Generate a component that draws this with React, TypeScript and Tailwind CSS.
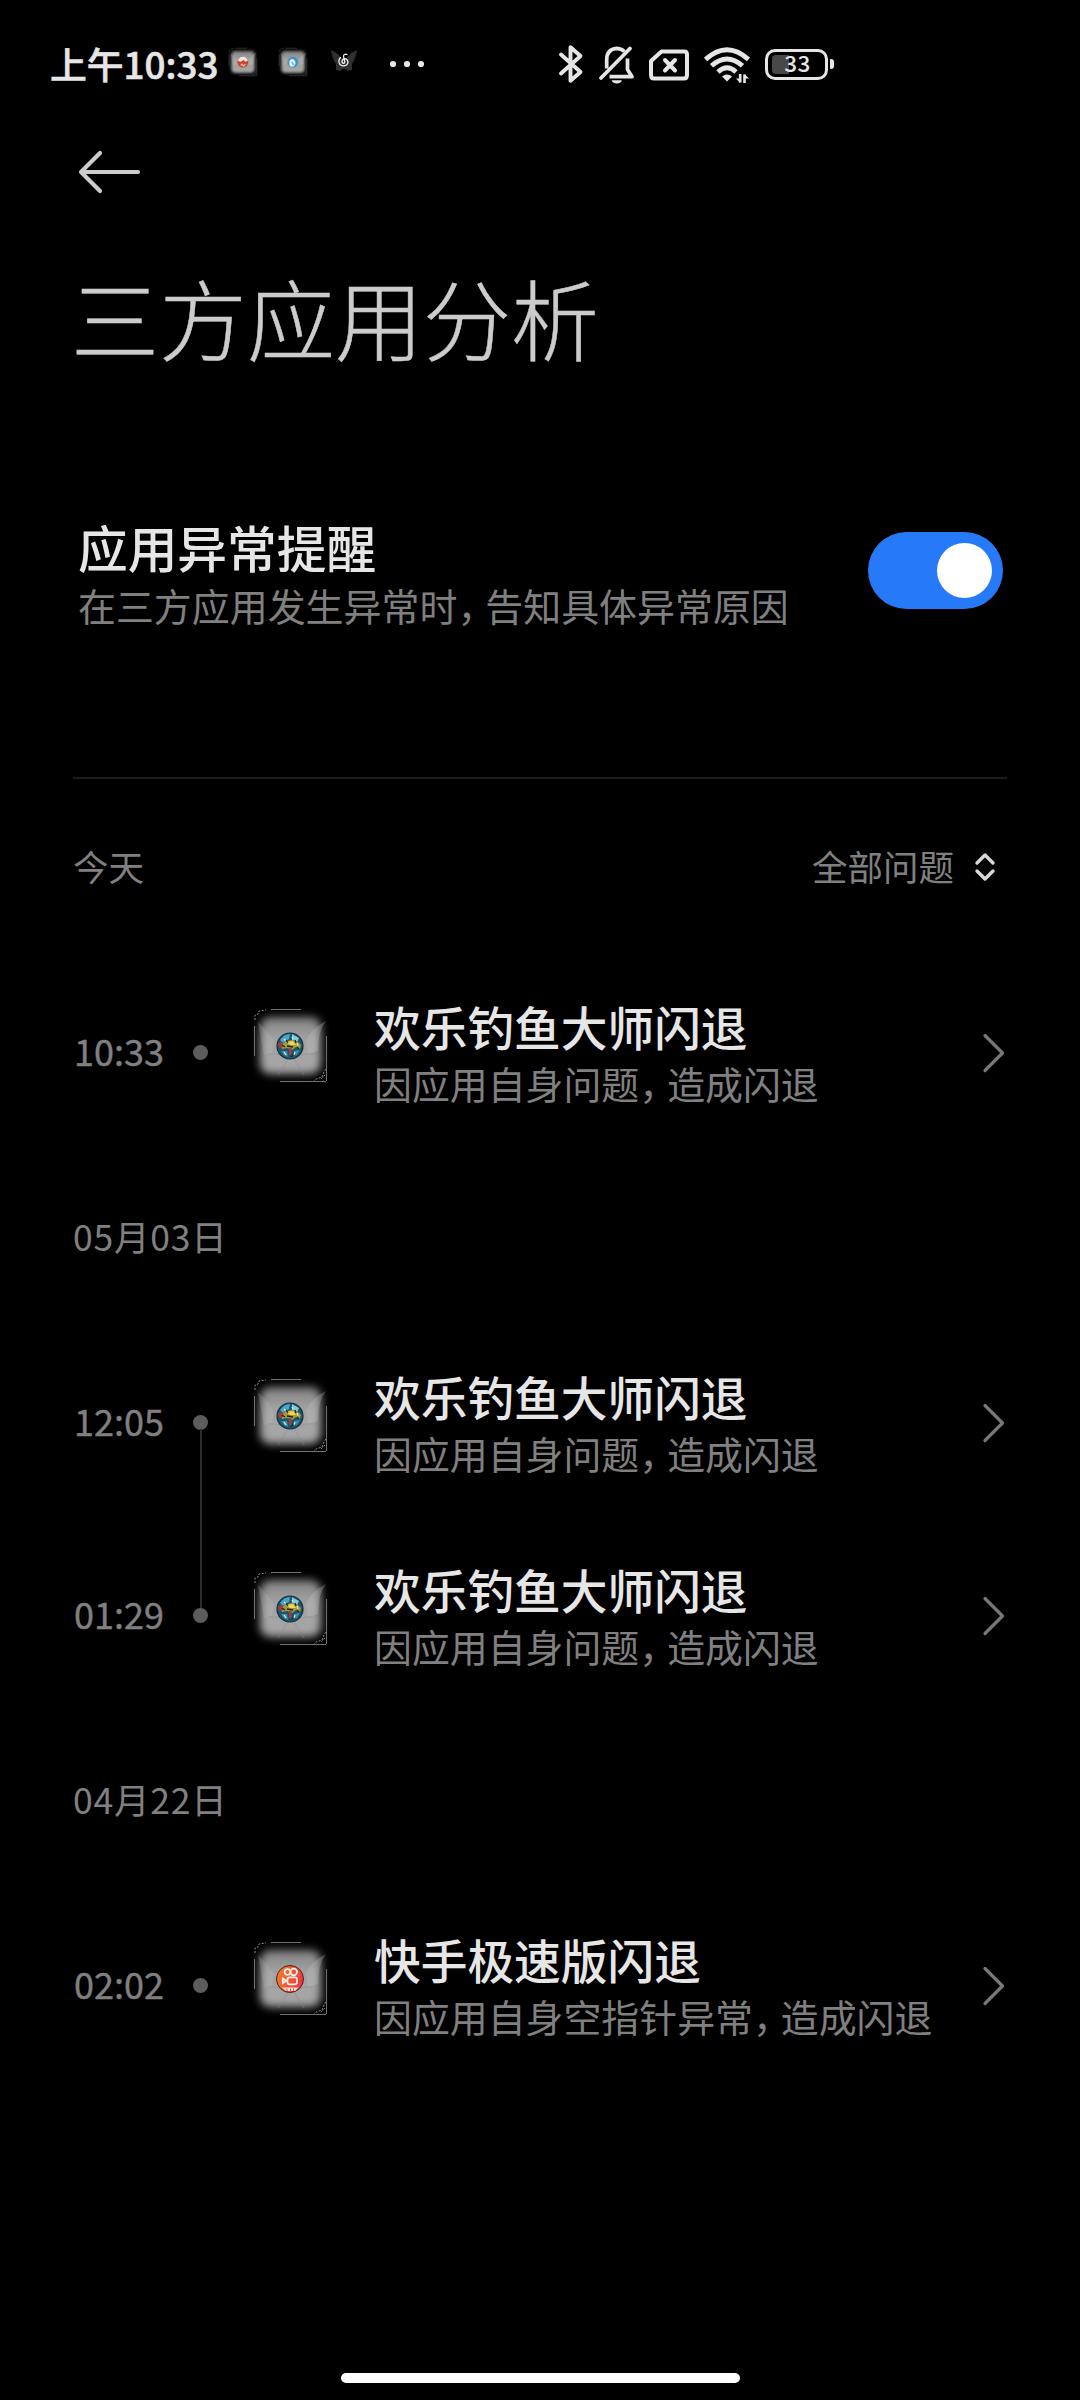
import React from 'react';

type AppKind = 'fishing' | 'kuaishou';

interface CrashRecord {
  time: string;
  app: AppKind;
  title: string;
  reason: string;
  result: string;
}

interface DayGroup {
  label: string;
  records: CrashRecord[];
}

const groups: DayGroup[] = [
  {
    label: '今天',
    records: [
      { time: '10:33', app: 'fishing', title: '欢乐钓鱼大师闪退', reason: '因应用自身问题', result: '造成闪退' },
    ],
  },
  {
    label: '05月03日',
    records: [
      { time: '12:05', app: 'fishing', title: '欢乐钓鱼大师闪退', reason: '因应用自身问题', result: '造成闪退' },
      { time: '01:29', app: 'fishing', title: '欢乐钓鱼大师闪退', reason: '因应用自身问题', result: '造成闪退' },
    ],
  },
  {
    label: '04月22日',
    records: [
      { time: '02:02', app: 'kuaishou', title: '快手极速版闪退', reason: '因应用自身空指针异常', result: '造成闪退' },
    ],
  },
];

// Soft grey plate that every themed app icon sits on
const Plate = () => (
  <>
    <defs>
      <filter id="soft" x="-20%" y="-20%" width="140%" height="140%">
        <feGaussianBlur stdDeviation="4" />
      </filter>
      <linearGradient id="plate" x1="0" y1="0" x2="0" y2="1">
        <stop offset="0" stopColor="#808080" />
        <stop offset="0.4" stopColor="#a4a4a4" />
        <stop offset="1" stopColor="#a6a6a6" />
      </linearGradient>
    </defs>
    <rect x="6" y="8" width="61" height="57" rx="10" fill="url(#plate)" filter="url(#soft)" />
    <path d="M4 13 Q14 22 20 32 L18 44 L10 46Z" fill="#c4c4c4" opacity="0.2" />
    <path d="M72 12 Q56 20 52 32 L54 45 L64 42 Q64 22 72 12Z" fill="#c4c4c4" opacity="0.28" />
    <path d="M14 45 Q26 44 34 50 L24 66M60 45 Q48 44 40 50 L50 66" fill="none" stroke="#8a8a8a" strokeWidth="1.2" opacity="0.4" />
    <path d="M17 .5H47M.5 17V47M72.500 27V72M26 72.500H72" fill="none" stroke="#707070" />
    <path d="M1 11V6L4 5L5 2L12 1M72 60L70 63L68 68L62 70L60 72M71 66L66 71" fill="none" stroke="#8c8c8c" strokeDasharray="2 1.500" />
  </>
);

const AppIcon: React.FC<{ app: AppKind }> = ({ app }) => (
  <svg viewBox="0 0 73 73" className="w-[73px] h-[73px] shrink-0 overflow-visible">
    <Plate />
    {app === 'fishing' ? (
      <g>
        <circle cx="36" cy="37" r="13" fill="#1c5670" stroke="#12303c" strokeWidth="1.200" />
        <path d="M26 31Q30 25 36 25L35 30L29 34Z" fill="#4ea4c8" />
        <path d="M38 25L45 29L43 33L38 31Z" fill="#83cbdc" />
        <path d="M27 36L31 33L37 31L43 32L47 36L46 40L42 38L38 41L33 39L28 40Z" fill="#a8973c" />
        <path d="M32 33L39 32L42 36L36 36Z" fill="#ecd858" />
        <path d="M24 34L28 33L29 38L25 39ZM35 39H37.500V46H35Z" fill="#a83a38" />
        <path d="M27 42L33 42L34 48L30 46ZM40 42L46 41L42 47Z" fill="#3e8fa8" />
        <path d="M30 43L32 46M41 43L40 46M30 30L32 32M43 34L44 37M38 28L39 30" stroke="#e4ecd8" strokeWidth="1.2" />
        <path d="M33 37L39 38M28 36L31 38M39 45L37 48M32 31L34 34M41 31L42 34M43 38L45 40" stroke="#1e2a20" strokeWidth="1.3" />
      </g>
    ) : (
      <g>
        <defs>
          <linearGradient id="ks" x1="0" y1="0.200" x2="1" y2="0.600">
            <stop offset="0" stopColor="#f0802a" />
            <stop offset="1" stopColor="#ee3340" />
          </linearGradient>
        </defs>
        <circle cx="36" cy="37" r="13.500" fill="url(#ks)" stroke="#4c2418" strokeWidth="1" />
        <g fill="none" stroke="#fff1e6" strokeWidth="1.700">
          <circle cx="33.500" cy="30" r="2.900" />
          <circle cx="39.700" cy="30" r="3.300" />
          <rect x="33.500" y="35.300" width="9.500" height="7" rx="2" />
          <path d="M32.500 38.800L28.800 36.500V41.200Z" />
        </g>
        <path d="M28 45.500H44.500L41 49H32Z" fill="#fbe3d6" />
        <path d="M33 46.500V49M36.500 46.500V49M39.500 46.500V49" stroke="#e04a38" strokeWidth="1" />
      </g>
    )}
  </svg>
);

const MiniIcon: React.FC<{ tone: 'red' | 'blue' }> = ({ tone }) => (
  <svg viewBox="0 0 73 73" className="w-7 h-7 shrink-0 overflow-visible">
    <Plate />
    {tone === 'red' ? (
      <>
        <circle cx="36" cy="37" r="14" fill="#c9442c" />
        <path d="M23 33Q27 23 36 23Q46 23 49 33L43 36L38 31L30 36Z" fill="#f6e6e0" />
        <path d="M30 46L34 42L38 47L43 42" stroke="#f0b8a8" strokeWidth="3" fill="none" />
      </>
    ) : (
      <>
        <circle cx="36" cy="37" r="14" fill="#3b93c9" />
        <path d="M27 44V36Q28 29 35 29Q43 30 43 42L38 48H30Z" fill="#e4f3fa" />
        <path d="M33 37L39 44" stroke="#65b2dc" strokeWidth="4" />
      </>
    )}
  </svg>
);

const StatusBar = () => (
  <div className="flex items-center h-[130px] pl-[50px] text-[#e6e6e6]">
    <span className="w-[179px] -mt-[3px] text-[36.800px] font-medium leading-none whitespace-nowrap [-webkit-text-stroke:0.600px_#e6e6e6]">上午10:33</span>
    <div className="flex items-center -mt-[6px]">
      <MiniIcon tone="red" />
      <div className="w-[22px]" />
      <MiniIcon tone="blue" />
      <svg viewBox="0 0 26 24" className="ml-6 w-[26px] h-6">
        <path d="M0 0Q7 3 10 8H16Q19 3 26 0Q25 8 21 14L21 20L17 21L14 19H12L9 21L5 20L5 14Q1 8 0 0Z" fill="#303030" />
        <path d="M16 4.500Q12.500 3.500 12.500 6.500L13.800 11.500Q13.800 13.500 12 13.300Q10.300 12.300 11.500 10Q13.500 7.500 15.800 9.500Q18.300 12.500 15.500 15Q12 17 9 14.500Q6.500 11 9.500 7.500" fill="none" stroke="#f0f0f0" strokeWidth="1.300" strokeLinecap="round" />
      </svg>
    </div>
    <svg viewBox="0 0 36 8" className="ml-[32px] w-9 h-2 -mt-0.5" fill="currentColor">
      <circle cx="4" cy="4" r="3.100" />
      <circle cx="18" cy="4" r="3.100" />
      <circle cx="32" cy="4" r="3.100" />
    </svg>

    {/* bluetooth */}
    <svg viewBox="0 0 26 40" className="ml-[133px] w-[26px] h-10 -mt-0.5" fill="none" stroke="currentColor" strokeWidth="3.900" strokeLinecap="round" strokeLinejoin="round">
      <path d="M3 10.500L22.500 28L12.500 36.800V3.200L22.500 12L3 29.500" />
    </svg>
    {/* muted bell */}
    <svg viewBox="0 0 36 38" className="ml-[15px] w-9 h-[38px] -mt-px" fill="none" stroke="currentColor" strokeWidth="3.700" strokeLinejoin="round">
      <path d="M25.500 5.500Q22 2.300 17.500 2.300Q8 3.300 7.700 13V22.500" />
      <path d="M10.500 30.700H33L28.500 23.500V12.500" />
      <path d="M31 2.500L2 32" strokeLinecap="round" />
      <path d="M12.500 34.200H23Q21.500 37.500 17.800 37.500Q14 37.500 12.500 34.200Z" fill="currentColor" stroke="none" />
    </svg>
    {/* no sim */}
    <svg viewBox="0 0 40 32" className="ml-[14px] w-10 h-8" fill="none" stroke="currentColor" strokeWidth="4" strokeLinejoin="round">
      <path d="M12.500 2.500H35Q38 2.500 38 5.500V26Q38 29.500 35 29.500H5Q2 29.500 2 26V12Z" />
      <path d="M16 11L26 21.500M26 11L16 21.500" strokeLinecap="round" />
    </svg>
    {/* wifi */}
    <svg viewBox="0 0 46 36" className="ml-[15px] w-[46px] h-9 -mt-px" fill="none" stroke="currentColor" strokeWidth="4.800">
      <path d="M1.500 12.500Q23 -7 44.500 12.500" />
      <path d="M7.500 18.800Q23 5 38.500 18.800" />
      <path d="M14 25Q23 16.500 32 25" />
      <path d="M18 29.500Q23 25.500 28 29.500L23 34.500Z" fill="currentColor" stroke="none" />
      <path d="M36.200 27V35.500M40.500 36V27.500" strokeWidth="2.600" />
      <path d="M32 31.500L36.200 36V31.500ZM45 31.500L40.500 27V31.500Z" fill="currentColor" stroke="none" />
    </svg>
    {/* battery */}
    <div className="ml-[15px] flex items-center -mt-0.5">
      <div className="relative flex items-center justify-center w-[63px] h-[31px] border-[3px] border-[#e6e6e6] rounded-[10px]">
        <div className="absolute left-1 top-[3px] w-[17px] h-[19px] rounded-l-[4px] bg-[#484848]" />
        <span className="relative text-[22.500px] font-medium leading-none tracking-[0.300px] ml-[2px] -mt-[3px]">33</span>
      </div>
      <div className="ml-[2px] w-1 h-[10px] rounded-r-[3px] rounded-l-[1px] bg-[#e6e6e6]" />
    </div>
  </div>
);

// The comma is set narrower than a full ideograph
const Comma = () => <span className="tracking-[-10px]">，</span>;

const Chevron = () => (
  <svg viewBox="0 0 24 40" className="ml-auto w-6 h-10 shrink-0" fill="none" stroke="#787878" strokeWidth="3.200" strokeLinecap="round" strokeLinejoin="round">
    <path d="M3 2.500L20.500 20L3 37.500" />
  </svg>
);

const RecordRow: React.FC<{ record: CrashRecord; linked: boolean }> = ({ record, linked }) => (
  <div className="flex items-center h-[193px] pl-[74px] pr-[74px]">
    <span className="w-[119px] -mt-[5px] text-[36px] leading-none text-[#808080] [-webkit-text-stroke:0.400px_#808080]">{record.time}</span>
    <div className="relative w-[15px] h-[15px] shrink-0 rounded-full bg-[#5c5c5c]">
      {linked && <div className="absolute left-[7px] top-[14px] w-0.5 h-[180px] bg-[#2c2c2c]" />}
    </div>
    <div className="ml-[46px] -mt-[14px]">
      <AppIcon app={record.app} />
    </div>
    <div className="ml-[47px] mt-[3px] whitespace-nowrap">
      <div className="text-[46.700px] font-medium leading-[58px] text-[#e6e6e6]">{record.title}</div>
      <div className="text-[37.900px] leading-[56px] text-[#808080]">
        {record.reason}<Comma />{record.result}
      </div>
    </div>
    <Chevron />
  </div>
);

const App: React.FC = () => {
  return (
    <div className="flex flex-col w-[1080px] h-[2400px] overflow-hidden bg-black font-['Noto_Sans_CJK_SC',sans-serif]">
      <StatusBar />

      <div className="h-[84px] pl-[78px] pt-[19px]">
        <svg viewBox="0 0 64 46" className="w-16 h-[46px]" fill="none" stroke="#cccccc" strokeWidth="4.200" strokeLinecap="round" strokeLinejoin="round">
          <path d="M60 23H3M22 4L3 23L22 42" />
        </svg>
      </div>

      <h1 className="h-[280px] pt-[58px] pl-[71px] text-[88px] leading-[88px] font-light text-[#cccccc] [-webkit-text-stroke:0.500px_#cccccc]">三方应用分析</h1>

      <div className="flex items-center h-[152px] pl-[78px] pr-[77px]">
        <div className="mt-[7px]">
          <div className="text-[49.700px] font-medium leading-[62px] text-[#e6e6e6]">应用异常提醒</div>
          <div className="text-[37.950px] leading-[56px] text-[#808080]">
            在三方应用发生异常时<Comma />告知具体异常原因
          </div>
        </div>
        <div className="flex items-center justify-end ml-auto w-[135px] h-[77px] pr-[11px] rounded-full bg-[#277af7]">
          <div className="w-[55px] h-[55px] rounded-full bg-white" />
        </div>
      </div>

      <div className="mt-[131px] mx-[73px] h-0.5 shrink-0 bg-[#1c1c1c]" />

      {groups.map((group, groupIndex) => (
        <div key={group.label}>
          <div className="flex items-center justify-between h-[177px] pb-[3px] pl-[73px] pr-[84px] text-[35.500px] leading-none text-[#808080]">
            {groupIndex === 0 ? <span>{group.label}</span> : <span className="tracking-[0.800px]">{group.label}</span>}
            {groupIndex === 0 && (
              <div className="flex items-center">
                <span>全部问题</span>
                <svg viewBox="0 0 22 30" className="ml-5 mt-0.5 w-[22px] h-[30px]" fill="none" stroke="#d8d8d8" strokeWidth="3.400" strokeLinecap="round" strokeLinejoin="round">
                  <path d="M3 11L11 3L19 11M3 19L11 27L19 19" />
                </svg>
              </div>
            )}
          </div>
          {group.records.map((record, i) => (
            <RecordRow key={record.time} record={record} linked={i < group.records.length - 1} />
          ))}
        </div>
      ))}

      <div className="mt-auto mb-[17px] mx-auto w-[399px] h-[10px] rounded-full bg-white" />
    </div>
  );
};

export default App;
